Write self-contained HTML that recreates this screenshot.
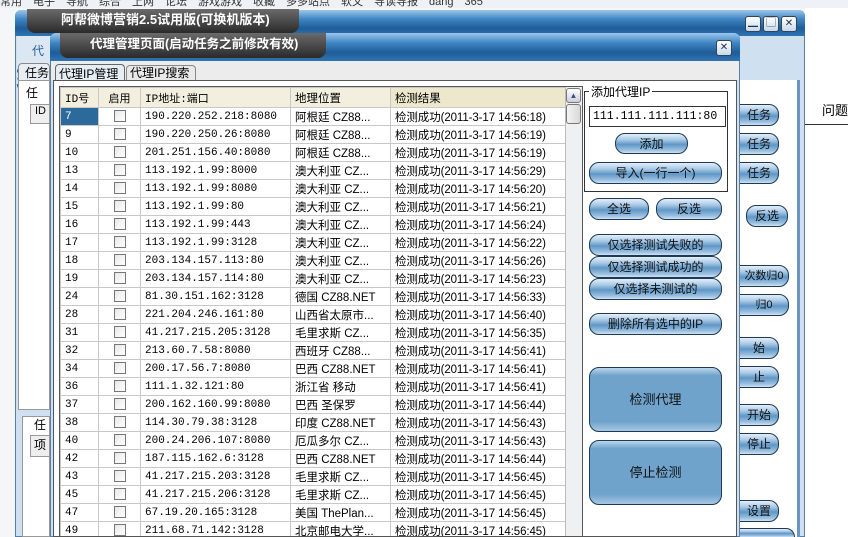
<!DOCTYPE html>
<html><head><meta charset="utf-8"><style>
*{margin:0;padding:0;box-sizing:border-box}
html,body{width:848px;height:537px;overflow:hidden}
body{background:#fff;font-family:"Liberation Sans","Noto Sans CJK SC",sans-serif;font-size:12px;position:relative}
.a{position:absolute}
.tb{background:linear-gradient(#9cc6ea,#3f86c4 35%,#1d5d98 70%,#2f75b3)}
.lbl{background:linear-gradient(#6a6a6a,#2a2a2a);color:#fff;font-weight:bold;font-size:13px;border-radius:0 0 8px 8px;padding-left:34px;line-height:22px;white-space:nowrap;overflow:hidden}
.btn{position:absolute;border:1px solid #1e3a56;border-radius:10px;background:linear-gradient(#e3eff9,#a9c9e6 30%,#5f97c6 55%,#9bc0e0 85%,#cfe2f2);text-align:center;font-size:12px;color:#111;line-height:20px;white-space:nowrap;overflow:hidden}
.big{position:absolute;border:1px solid #1e3a56;border-radius:10px;background:linear-gradient(#bcd6ec,#6fa3cc 12%,#6fa3cc 85%,#a8c8e3);text-align:center;font-size:13px;color:#111}
table{border-collapse:collapse;font-family:"Liberation Mono","Noto Sans CJK SC",monospace;font-size:11px}
td{height:18px;border:1px solid #c8c8c8;padding-left:4px;white-space:nowrap;overflow:hidden}
td:nth-child(4){font-family:"Liberation Sans","Noto Sans CJK SC",sans-serif;font-size:11.5px}
td:nth-child(5){font-family:"Liberation Sans","Noto Sans CJK SC",sans-serif;font-size:11.5px;letter-spacing:-0.1px}
td.c{text-align:center;padding:0}
.cb{display:inline-block;width:12px;height:12px;border:1px solid #777;background:linear-gradient(135deg,#e8e8e8,#fff);vertical-align:middle}
.wb{position:absolute;width:16px;height:16px;border:1px solid #345;border-radius:3px;background:linear-gradient(#fff,#c6d9ec);font-size:10px;text-align:center;line-height:14px;color:#234}
</style></head><body>
<div class="a" style="left:0;top:0;width:848px;height:8px;background:#eef2f6;font-size:11px;line-height:4px;color:#333;overflow:hidden;white-space:nowrap">常用　电子　导航　综合　上网　论坛　游戏游戏　收藏　多多站点　软文　导读导报　dang　365</div>
<div class="a" style="left:0;top:8px;width:848px;height:529px;background:#f4f6f8"></div>
<div class="a" style="left:805px;top:8px;width:43px;height:529px;background:#fff"></div>
<div class="a" style="left:822px;top:100px;font-size:13px">问题</div>
<div class="a" style="left:805px;top:124px;width:43px;height:1px;background:#333"></div>
<div class="a" style="left:15px;top:10px;width:790px;height:527px;background:#cfe0f0;border:1px solid #5a7fa5;border-radius:6px 6px 0 0"></div>
<div class="a tb" style="left:15px;top:10px;width:790px;height:26px;border-radius:6px 6px 0 0"></div>
<div class="a lbl" style="left:27px;top:9px;width:272px;height:24px">阿帮微博营销2.5试用版(可换机版本)</div>
<div class="wb" style="left:745px;top:16px">▁</div><div class="wb" style="left:763px;top:16px">▢</div><div class="wb" style="left:781px;top:16px">✕</div>
<div class="a" style="left:17px;top:36px;width:33px;height:30px;background:#dbe8f4;color:#2b5f93;font-size:12px;padding:6px 0 0 15px">代</div>
<div class="a" style="left:16px;top:60px;width:34px;height:30px;font-size:26px;color:#1a6ac0;font-weight:bold;overflow:hidden">软</div>
<div class="a" style="left:18px;top:63px;width:32px;height:18px;border:1px solid #888;border-radius:4px 4px 0 0;background:#e8eef4;font-size:12px;padding-left:6px;white-space:nowrap;overflow:hidden">任务</div>
<div class="a" style="left:18px;top:80px;width:32px;height:330px;background:#fff;border:1px solid #999"></div>
<div class="a" style="left:26px;top:84px;font-size:12px">任</div>
<div class="a" style="left:30px;top:104px;width:20px;height:20px;background:#eee;border:1px solid #999;font-size:11px;padding-left:4px">ID</div>
<div class="a" style="left:22px;top:416px;width:28px;height:121px;background:#fff;border:1px solid #999"></div>
<div class="a" style="left:34px;top:416px;font-size:12px">任</div>
<div class="a" style="left:30px;top:435px;width:20px;height:22px;background:#eee;border:1px solid #999;font-size:12px;padding-left:3px">项</div>
<div class="a" style="left:740px;top:80px;width:60px;height:457px;background:#fff;border-right:3px solid #6c95bd"></div>
<div class="btn" style="left:715px;top:104px;width:64px;height:22px;padding-left:24px">任务</div>
<div class="btn" style="left:715px;top:133px;width:64px;height:22px;padding-left:24px">任务</div>
<div class="btn" style="left:715px;top:162px;width:64px;height:22px;padding-left:24px">任务</div>
<div class="btn" style="left:746px;top:205px;width:42px;height:22px">反选</div>
<div class="btn" style="left:715px;top:265px;width:74px;height:22px;padding-left:24px;font-size:11px">次数归0</div>
<div class="btn" style="left:715px;top:294px;width:74px;height:22px;padding-left:24px;font-size:11px">归0</div>
<div class="btn" style="left:715px;top:337px;width:64px;height:22px;padding-left:24px">始</div>
<div class="btn" style="left:715px;top:366px;width:64px;height:22px;padding-left:24px">止</div>
<div class="btn" style="left:715px;top:404px;width:64px;height:22px;padding-left:24px">开始</div>
<div class="btn" style="left:715px;top:433px;width:64px;height:22px;padding-left:24px">停止</div>
<div class="btn" style="left:715px;top:500px;width:64px;height:22px;padding-left:24px">设置</div>
<div class="btn" style="left:715px;top:528px;width:80px;height:9px;border-bottom:none;border-radius:10px 10px 0 0"></div>
<div class="a" style="left:50px;top:33px;width:690px;height:504px;background:#cfe0f0;border:1px solid #5a7fa5;border-radius:6px 6px 0 0"></div>
<div class="a tb" style="left:50px;top:33px;width:690px;height:28px;border-radius:6px 6px 0 0"></div>
<div class="a lbl" style="left:60px;top:33px;width:266px;height:25px;font-size:12.5px;padding-left:30px">代理管理页面(启动任务之前修改有效)</div>
<div class="wb" style="left:716px;top:40px">✕</div>
<div class="a" style="left:51px;top:61px;width:688px;height:19px;background:#ececec"></div>
<div class="a" style="left:55px;top:64px;width:70px;height:17px;border:1px solid #666;border-bottom:none;border-radius:4px 4px 0 0;background:#e6eef5;font-size:12px;padding-left:3px;white-space:nowrap">代理IP管理</div>
<div class="a" style="left:126px;top:65px;width:70px;height:15px;border:1px solid #888;border-bottom:none;border-radius:4px 4px 0 0;background:#e9e9e9;font-size:12px;padding-left:3px;line-height:14px;white-space:nowrap">代理IP搜索</div>
<div class="a" style="left:53px;top:80px;width:684px;height:457px;background:#fff;border:1px solid #555"></div>
<div class="a" style="left:59px;top:86px;width:524px;height:451px;border:1px solid #555;overflow:hidden;background:#fff">
<table style="width:506px;table-layout:fixed">
<col style="width:38px"><col style="width:42px"><col style="width:150px"><col style="width:100px"><col style="width:176px">
<tr><td style="height:20px;background:#f2efdf">ID号</td><td class="c" style="background:#f2efdf">启用</td><td style="background:#f2efdf">IP地址:端口</td><td style="background:#f2efdf">地理位置</td><td style="background:#ede7cc">检测结果</td></tr>
<tr><td style="background:#2d6a9c;color:#fff">7</td><td class="c"><span class="cb"></span></td><td>190.220.252.218:8080</td><td>阿根廷  CZ88...</td><td>检测成功(2011-3-17 14:56:18)</td></tr>
<tr><td>9</td><td class="c"><span class="cb"></span></td><td>190.220.250.26:8080</td><td>阿根廷  CZ88...</td><td>检测成功(2011-3-17 14:56:19)</td></tr>
<tr><td>10</td><td class="c"><span class="cb"></span></td><td>201.251.156.40:8080</td><td>阿根廷  CZ88...</td><td>检测成功(2011-3-17 14:56:19)</td></tr>
<tr><td>13</td><td class="c"><span class="cb"></span></td><td>113.192.1.99:8000</td><td>澳大利亚  CZ...</td><td>检测成功(2011-3-17 14:56:29)</td></tr>
<tr><td>14</td><td class="c"><span class="cb"></span></td><td>113.192.1.99:8080</td><td>澳大利亚  CZ...</td><td>检测成功(2011-3-17 14:56:20)</td></tr>
<tr><td>15</td><td class="c"><span class="cb"></span></td><td>113.192.1.99:80</td><td>澳大利亚  CZ...</td><td>检测成功(2011-3-17 14:56:21)</td></tr>
<tr><td>16</td><td class="c"><span class="cb"></span></td><td>113.192.1.99:443</td><td>澳大利亚  CZ...</td><td>检测成功(2011-3-17 14:56:24)</td></tr>
<tr><td>17</td><td class="c"><span class="cb"></span></td><td>113.192.1.99:3128</td><td>澳大利亚  CZ...</td><td>检测成功(2011-3-17 14:56:22)</td></tr>
<tr><td>18</td><td class="c"><span class="cb"></span></td><td>203.134.157.113:80</td><td>澳大利亚  CZ...</td><td>检测成功(2011-3-17 14:56:26)</td></tr>
<tr><td>19</td><td class="c"><span class="cb"></span></td><td>203.134.157.114:80</td><td>澳大利亚  CZ...</td><td>检测成功(2011-3-17 14:56:23)</td></tr>
<tr><td>24</td><td class="c"><span class="cb"></span></td><td>81.30.151.162:3128</td><td>德国  CZ88.NET</td><td>检测成功(2011-3-17 14:56:33)</td></tr>
<tr><td>28</td><td class="c"><span class="cb"></span></td><td>221.204.246.161:80</td><td>山西省太原市...</td><td>检测成功(2011-3-17 14:56:40)</td></tr>
<tr><td>31</td><td class="c"><span class="cb"></span></td><td>41.217.215.205:3128</td><td>毛里求斯  CZ...</td><td>检测成功(2011-3-17 14:56:35)</td></tr>
<tr><td>32</td><td class="c"><span class="cb"></span></td><td>213.60.7.58:8080</td><td>西班牙  CZ88...</td><td>检测成功(2011-3-17 14:56:41)</td></tr>
<tr><td>34</td><td class="c"><span class="cb"></span></td><td>200.17.56.7:8080</td><td>巴西  CZ88.NET</td><td>检测成功(2011-3-17 14:56:41)</td></tr>
<tr><td>36</td><td class="c"><span class="cb"></span></td><td>111.1.32.121:80</td><td>浙江省 移动</td><td>检测成功(2011-3-17 14:56:41)</td></tr>
<tr><td>37</td><td class="c"><span class="cb"></span></td><td>200.162.160.99:8080</td><td>巴西 圣保罗</td><td>检测成功(2011-3-17 14:56:44)</td></tr>
<tr><td>38</td><td class="c"><span class="cb"></span></td><td>114.30.79.38:3128</td><td>印度  CZ88.NET</td><td>检测成功(2011-3-17 14:56:43)</td></tr>
<tr><td>40</td><td class="c"><span class="cb"></span></td><td>200.24.206.107:8080</td><td>厄瓜多尔  CZ...</td><td>检测成功(2011-3-17 14:56:43)</td></tr>
<tr><td>42</td><td class="c"><span class="cb"></span></td><td>187.115.162.6:3128</td><td>巴西  CZ88.NET</td><td>检测成功(2011-3-17 14:56:44)</td></tr>
<tr><td>43</td><td class="c"><span class="cb"></span></td><td>41.217.215.203:3128</td><td>毛里求斯  CZ...</td><td>检测成功(2011-3-17 14:56:45)</td></tr>
<tr><td>45</td><td class="c"><span class="cb"></span></td><td>41.217.215.206:3128</td><td>毛里求斯  CZ...</td><td>检测成功(2011-3-17 14:56:45)</td></tr>
<tr><td>47</td><td class="c"><span class="cb"></span></td><td>67.19.20.165:3128</td><td>美国  ThePlan...</td><td>检测成功(2011-3-17 14:56:45)</td></tr>
<tr><td>49</td><td class="c"><span class="cb"></span></td><td>211.68.71.142:3128</td><td>北京邮电大学...</td><td>检测成功(2011-3-17 14:56:45)</td></tr>
</table>
<div class="a" style="left:505px;top:0;width:17px;height:451px;background:#eef0f2;border-left:1px solid #bbb"></div>
<div class="a" style="left:506px;top:1px;width:15px;height:15px;border:1px solid #777;border-radius:3px;background:linear-gradient(#fff,#ccd);font-size:8px;text-align:center;line-height:13px;color:#357">▲</div>
<div class="a" style="left:506px;top:17px;width:15px;height:20px;border:1px solid #777;border-radius:3px;background:linear-gradient(90deg,#f4f4f4,#d8d8d8)"></div>
</div>
<div class="a" style="left:584px;top:91px;width:144px;height:101px;border:1px solid #333"></div>
<div class="a" style="left:589px;top:83px;background:#fff;padding:0 2px;font-size:12px;white-space:nowrap">添加代理IP</div>
<div class="a" style="left:589px;top:106px;width:137px;height:21px;border:1px solid #333;font-family:'Liberation Mono',monospace;font-size:11.5px;padding:3px 0 0 3px">111.111.111.111:80</div>
<div class="btn" style="left:615px;top:133px;width:73px;height:21px">添加</div>
<div class="btn" style="left:589px;top:162px;width:133px;height:22px">导入(一行一个)</div>
<div class="btn" style="left:589px;top:198px;width:60px;height:22px">全选</div>
<div class="btn" style="left:656px;top:198px;width:66px;height:22px">反选</div>
<div class="btn" style="left:589px;top:234px;width:133px;height:22px">仅选择测试失败的</div>
<div class="btn" style="left:589px;top:256px;width:133px;height:22px">仅选择测试成功的</div>
<div class="btn" style="left:589px;top:278px;width:133px;height:22px">仅选择未测试的</div>
<div class="btn" style="left:589px;top:313px;width:133px;height:22px">删除所有选中的IP</div>
<div class="big" style="left:589px;top:367px;width:133px;height:65px;line-height:63px">检测代理</div>
<div class="big" style="left:589px;top:440px;width:133px;height:65px;line-height:63px">停止检测</div>
</body></html>
